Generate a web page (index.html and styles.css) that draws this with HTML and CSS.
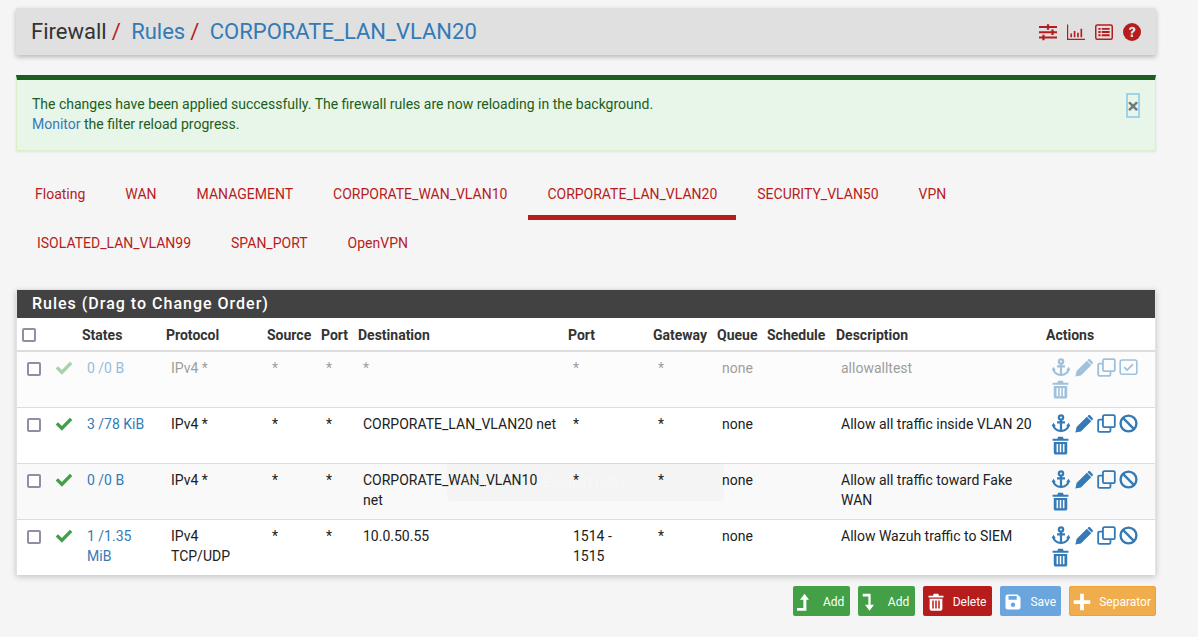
FILE: index.html
```html
<!DOCTYPE html>
<html lang="en">
<head>
<meta charset="utf-8">
<title>Firewall: Rules: CORPORATE_LAN_VLAN20</title>
<link rel="stylesheet" href="styles.css">
</head>
<body>
<svg class="sprite" aria-hidden="true">
  <defs>
    <symbol id="i-anchor" viewBox="0 0 24 24"><g fill="none" stroke="currentColor" stroke-width="2.8"><circle cx="12" cy="4.300" r="2.700"/><path d="M12 7v15M7 10.500h10"/><path d="M2.500 13.500c0 4.500 4.500 7.500 9.500 8 5-.5 9.500-3.500 9.500-8"/></g><path fill="currentColor" d="M0 15.500l2.500-4.500 3 4.500zM18.500 15.500l3-4.500 2.500 4.500z"/></symbol>
    <symbol id="i-pencil" viewBox="0 0 24 24"><path fill="currentColor" d="M.5 23.500l1.500-7L15 3.500l5.500 5.500-13 13zM16.500 2c.8-.8 2-.8 2.800 0l2.700 2.700c.8.800.8 2 0 2.800l-.8.800L15.700 2.800z"/></symbol>
    <symbol id="i-clone" viewBox="0 0 24 24"><g fill="none" stroke="currentColor" stroke-width="2.300"><rect x="7.500" y="1.500" width="15" height="15" rx="1.500"/><path d="M7.500 7h-4.500A1.500 1.500 0 0 0 1.500 8.500V21a1.500 1.500 0 0 0 1.500 1.500h12.500a1.500 1.500 0 0 0 1.500-1.500v-4.500"/></g></symbol>
    <symbol id="i-ban" viewBox="0 0 24 24"><g fill="none" stroke="currentColor" stroke-width="3"><circle cx="12" cy="12" r="10"/><path d="M5 5l14 14"/></g></symbol>
    <symbol id="i-check-sq" viewBox="0 0 24 24"><rect x="1.500" y="2.500" width="21" height="18" rx="2.500" fill="none" stroke="currentColor" stroke-width="2"/><path d="M6.500 11.500l3.700 3.700L17.500 8" fill="none" stroke="currentColor" stroke-width="2.300"/></symbol>
    <symbol id="i-trash" viewBox="0 0 24 24"><path fill="currentColor" fill-rule="evenodd" d="M8 3.500L9 1h6l1 2.500h6V6H2V3.500zM3.500 7.500h17V21a2.500 2.500 0 0 1-2.500 2.500H6A2.500 2.500 0 0 1 3.500 21zM7 10v10.500h2V10zM11 10v10.500h2V10zM15 10v10.500h2V10z"/></symbol>
    <symbol id="i-check" viewBox="0 0 24 24"><path fill="none" stroke="currentColor" stroke-width="4.600" d="M2.500 12.500l6.700 6.700L21.500 6.500"/></symbol>
    <symbol id="i-sliders" viewBox="0 0 24 24"><path fill="currentColor" d="M0 4h24v2.600H0zM0 11h24v2.600H0zM0 18h24v2.600H0zM10.500 1.500h3v7.500h-3zM16.500 8.500h3V16h-3zM4.500 15.500h3V23h-3z"/></symbol>
    <symbol id="i-chart" viewBox="0 0 24 24"><path fill="currentColor" d="M0 2h1.600v19H24v1.600H0zM4.500 14h2.200v5H4.500zM9 10.500h2.200V19H9zM13.500 13h2.200v6h-2.200zM18 7.500h2.200V19H18z"/></symbol>
    <symbol id="i-list" viewBox="0 0 24 24"><rect x="1" y="2.500" width="22" height="19" rx="2" fill="none" stroke="currentColor" stroke-width="2"/><path fill="currentColor" d="M4.500 6.500h3v2.400h-3zM9 6.500h10.500v2.400H9zM4.500 10.800h3v2.400h-3zM9 10.800h10.500v2.400H9zM4.500 15.100h3v2.400h-3zM9 15.100h10.500v2.400H9z"/></symbol>
    <symbol id="i-help" viewBox="0 0 24 24"><circle cx="12" cy="12" r="12" fill="currentColor"/><path d="M7.800 8.800c.4-2.700 2.200-3.800 4.500-3.800 2.500 0 4.300 1.500 4.300 3.500 0 3-3.300 3-3.300 5.500h-3c0-3.700 3.100-3.700 3.100-5.300 0-.7-.6-1.200-1.300-1.200-.8 0-1.300.5-1.500 1.700zM10.300 15.400h3v3.100h-3z" fill="#e0e0e0"/></symbol>
    <symbol id="i-up" viewBox="0 0 24 24"><path fill="currentColor" d="M10 1l6 8h-3.500v14.500H0V20h8.500V9H4z"/></symbol>
    <symbol id="i-down" viewBox="0 0 24 24"><path fill="currentColor" d="M1 1h10.500v14.500H16L10 23.500 4 15.500h4.500V4.500H1z"/></symbol>
    <symbol id="i-save" viewBox="0 0 24 24"><path fill="currentColor" fill-rule="evenodd" d="M2 5a3 3 0 0 1 3-3h13l4 4v13a3 3 0 0 1-3 3H5a3 3 0 0 1-3-3zM6 4v5h11V4zM12 12.500a3 3 0 1 0 0 6 3 3 0 0 0 0-6z"/></symbol>
    <symbol id="i-plus" viewBox="0 0 24 24"><path fill="currentColor" d="M9.500 1h5v8.500H23v5h-8.500V23h-5v-8.500H1v-5h8.500z"/></symbol>
  </defs>
</svg>

<main class="page">
  <header class="crumbs">
    <h1 class="crumbs-title">
      <span>Firewall</span><span class="sep">/</span>
      <a class="crumb-link" href="#">Rules</a><span class="sep">/</span>
      <a class="crumb-link" href="#">CORPORATE_LAN_VLAN20</a>
    </h1>
    <div class="crumbs-icons">
      <svg class="ci"><use href="#i-sliders"/></svg>
      <svg class="ci"><use href="#i-chart"/></svg>
      <svg class="ci"><use href="#i-list"/></svg>
      <svg class="ci"><use href="#i-help"/></svg>
    </div>
  </header>

  <section class="alert">
    <p>The changes have been applied successfully. The firewall rules are now reloading in the background.<br><a href="#">Monitor</a> the filter reload progress.</p>
    <button class="alert-close" type="button">×</button>
  </section>

  <nav>
    <ul class="tabs">
      <li><a href="#">Floating</a></li>
      <li><a href="#">WAN</a></li>
      <li><a href="#">MANAGEMENT</a></li>
      <li><a href="#">CORPORATE_WAN_VLAN10</a></li>
      <li class="active"><a href="#">CORPORATE_LAN_VLAN20</a></li>
      <li><a href="#">SECURITY_VLAN50</a></li>
      <li><a href="#">VPN</a></li>
      <li class="wrapped"><a href="#">ISOLATED_LAN_VLAN99</a></li>
      <li><a href="#">SPAN_PORT</a></li>
      <li><a href="#">OpenVPN</a></li>
    </ul>
  </nav>

  <section class="panel">
    <h2 class="panel-title">Rules (Drag to Change Order)</h2>
    <table class="rules">
      <colgroup>
        <col class="c-box"><col class="c-stat"><col class="c-states"><col class="c-proto"><col class="c-src"><col class="c-sport"><col class="c-dest"><col class="c-dport"><col class="c-gw"><col class="c-queue"><col class="c-sched"><col class="c-desc"><col class="c-act">
      </colgroup>
      <thead>
        <tr><th><span class="box"></span></th><th></th><th>States</th><th>Protocol</th><th>Source</th><th>Port</th><th>Destination</th><th>Port</th><th>Gateway</th><th>Queue</th><th>Schedule</th><th>Description</th><th>Actions</th></tr>
      </thead>
      <tbody>
        <tr class="disabled">
          <td><span class="box"></span></td>
          <td class="tick"><svg class="ok"><use href="#i-check"/></svg></td>
          <td><a href="#">0 /0 B</a></td><td>IPv4 *</td><td>*</td><td>*</td><td class="wide">*</td><td>*</td><td>*</td><td>none</td><td></td><td class="wide">allowalltest</td>
          <td class="acts"><svg class="a"><use href="#i-anchor"/></svg><svg class="a"><use href="#i-pencil"/></svg><svg class="a"><use href="#i-clone"/></svg><svg class="a"><use href="#i-check-sq"/></svg><svg class="a"><use href="#i-trash"/></svg></td>
        </tr>
        <tr>
          <td><span class="box"></span></td>
          <td class="tick"><svg class="ok"><use href="#i-check"/></svg></td>
          <td><a href="#">3 /78 KiB</a></td><td>IPv4 *</td><td>*</td><td>*</td><td class="wide">CORPORATE_LAN_VLAN20 net</td><td>*</td><td>*</td><td>none</td><td></td><td class="wide">Allow all traffic inside VLAN 20</td>
          <td class="acts"><svg class="a"><use href="#i-anchor"/></svg><svg class="a"><use href="#i-pencil"/></svg><svg class="a"><use href="#i-clone"/></svg><svg class="a"><use href="#i-ban"/></svg><svg class="a"><use href="#i-trash"/></svg></td>
        </tr>
        <tr class="alt">
          <td><span class="box"></span></td>
          <td class="tick"><svg class="ok"><use href="#i-check"/></svg></td>
          <td><a href="#">0 /0 B</a></td><td>IPv4 *</td><td>*</td><td>*</td><td class="wide">CORPORATE_WAN_VLAN10 net</td><td>*</td><td>*</td><td>none</td><td></td><td class="wide">Allow all traffic toward Fake WAN</td>
          <td class="acts"><svg class="a"><use href="#i-anchor"/></svg><svg class="a"><use href="#i-pencil"/></svg><svg class="a"><use href="#i-clone"/></svg><svg class="a"><use href="#i-ban"/></svg><svg class="a"><use href="#i-trash"/></svg></td>
        </tr>
        <tr>
          <td><span class="box"></span></td>
          <td class="tick"><svg class="ok"><use href="#i-check"/></svg></td>
          <td><a href="#">1 /1.35 MiB</a></td><td>IPv4 TCP/UDP</td><td>*</td><td>*</td><td class="wide">10.0.50.55</td><td>1514 - 1515</td><td>*</td><td>none</td><td></td><td class="wide">Allow Wazuh traffic to SIEM</td>
          <td class="acts"><svg class="a"><use href="#i-anchor"/></svg><svg class="a"><use href="#i-pencil"/></svg><svg class="a"><use href="#i-clone"/></svg><svg class="a"><use href="#i-ban"/></svg><svg class="a"><use href="#i-trash"/></svg></td>
        </tr>
      </tbody>
    </table>
  </section>

  <div class="buttons">
    <button class="btn green" type="button"><svg class="bi"><use href="#i-up"/></svg>Add</button>
    <button class="btn green" type="button"><svg class="bi"><use href="#i-down"/></svg>Add</button>
    <button class="btn red" type="button"><svg class="bi"><use href="#i-trash"/></svg>Delete</button>
    <button class="btn blue" type="button"><svg class="bi"><use href="#i-save"/></svg>Save</button>
    <button class="btn orange" type="button"><svg class="bi"><use href="#i-plus"/></svg>Separator</button>
  </div>
</main>

<div class="toast">
  <svg class="toast-icon" viewBox="0 0 26 20"><path fill="none" stroke="currentColor" d="M.5 6.500h25v13H.5zM4 10h18M4 13h18M8 16h10M14 6.500V1h5"/></svg>
  <span>English (US)</span>
</div>
</body>
</html>
```

FILE: styles.css
```css
* { box-sizing: border-box; }
html, body { height: 100%; }
body {
  margin: 0;
  background: #f5f5f5;
  font: 14px/20px Roboto, "Liberation Sans", sans-serif;
  color: #212121;
  overflow: hidden;
}
a { color: #337ab7; text-decoration: none; }
.sprite { width: 0; height: 0; position: absolute; }
.page { width: 1140px; margin-left: 16px; padding-top: 8px; }

.crumbs {
  height: 47px;
  background: #e0e0e0;
  box-shadow: 0 2px 5px rgba(0,0,0,.26);
  border-radius: 2px;
  display: flex;
  align-items: center;
  justify-content: space-between;
  padding: 0 15px;
}
.crumbs-title { margin: 0; font-size: 22px; font-weight: 400; line-height: 30px; color: #333; white-space: nowrap; }
.sep { color: #b71c1c; margin-left: 5px; }
.crumb-link { margin-left: 5px; }
.crumbs-icons { display: flex; gap: 10px; align-items: center; }
.ci { width: 18px; height: 18px; color: #b71c1c; }

.alert {
  margin-top: 20px;
  height: 76px;
  background: #e8f5e9;
  border: 1px solid #dcedc8;
  border-top: 5px solid #1b5e20;
  color: #1b5e20;
  padding: 14px 15px;
  display: flex;
  justify-content: space-between;
  box-shadow: 0 1px 2px rgba(0,0,0,.08);
}
.alert p { margin: 0; }
.alert-close {
  width: 14px;
  height: 25px;
  padding: 0;
  margin-top: -1px;
  background: transparent;
  border: 1px solid #9fd3ea;
  box-shadow: 0 0 0 1px #9fd3ea inset;
  color: #707a72;
  font: 700 21px/20px Roboto, sans-serif;
}

.tabs { list-style: none; margin: 20px 0 0; padding: 0; display: flex; flex-wrap: wrap; }
.tabs li { height: 49px; margin-right: 2px; border-bottom: 5px solid transparent; }
.tabs a { display: block; padding: 13px 19px 0; color: #b71c1c; }
.tabs .active { border-bottom-color: #b71c1c; }
.tabs .wrapped { margin-left: 2px; }

.panel {
  margin-top: 20px;
  background: #fff;
  border: 1px solid #e2e2e2;
  border-bottom: 0;
  box-shadow: 0 2px 6px rgba(0,0,0,.2);
}
.panel-title {
  margin: 0;
  height: 28px;
  background: #424242;
  color: #fff;
  font-size: 16px;
  font-weight: 500;
  line-height: 28px;
  letter-spacing: 1px;
  padding-left: 15px;
}
.rules { width: 100%; table-layout: fixed; border-collapse: collapse; }
.c-box { width: 30px; } .c-stat { width: 30px; } .c-states { width: 84px; } .c-proto { width: 101px; }
.c-src { width: 54px; } .c-sport { width: 37px; } .c-dest { width: 210px; } .c-dport { width: 85px; }
.c-gw { width: 64px; } .c-queue { width: 50px; } .c-sched { width: 69px; } .c-desc { width: 210px; } .c-act { width: 114px; }
.rules th {
  height: 33px;
  padding: 2px 0 0 5px;
  font-weight: 700;
  text-align: left;
  white-space: nowrap;
  border-bottom: 2px solid #ddd;
  color: #333;
  vertical-align: middle;
}
.rules th .box { margin-top: 0; }
.rules td {
  height: 56px;
  padding: 6px 10px 0 10px;
  vertical-align: top;
  border-top: 1px solid #ddd;
}
.rules td.wide { padding-right: 5px; }
.rules tbody tr:first-child td { border-top: 0; }
.rules .disabled td { background: #fcfcfc; color: #9e9e9e; }
.rules .disabled a { opacity: .5; }
.rules .disabled .ok, .rules .disabled .a { opacity: .45; }
.rules .alt td { background: #f9f9f9; }
.rules .tick { padding: 6px 0 0 8px; }
.box {
  display: block;
  width: 14px;
  height: 14px;
  border: 2px solid #8f8fa3;
  border-radius: 2px;
  background: #fff;
  margin-top: 4px;
}
.ok { width: 18px; height: 18px; color: #43a047; display: block; }
.rules .acts { padding: 6px 12px 0 10px; font-size: 0; line-height: 0; }
.a { width: 19px; height: 19px; color: #337ab7; margin: 0 3px 3px 0; display: inline-block; vertical-align: top; }
.a:first-child { width: 20px; margin-right: 4px; }

.buttons { display: flex; justify-content: flex-end; gap: 8px; margin-top: 11px; }
.btn {
  height: 30px;
  display: flex;
  align-items: center;
  padding: 1px 4px 0;
  border: 1px solid transparent;
  border-radius: 2px;
  color: #fff;
  font: 12px/16px Roboto, sans-serif;
}
.bi { width: 18px; height: 18px; margin: 0 8px 0 -1px; flex: none; }
.green { background: #43a047; padding-right: 4.5px; }
.red { background: #b71c1c; padding-right: 5px; }
.blue { background: #6aa5dd; }
.orange { background: #f0ad4e; border-color: #eea236; }

.toast {
  position: absolute;
  left: 447px;
  top: 463px;
  width: 277px;
  height: 38px;
  border-radius: 4px;
  background: rgba(0,0,0,.02);
  color: rgba(255,255,255,.3);
  font-size: 15px;
  line-height: 38px;
  padding-left: 96px;
  pointer-events: none;
}
.toast-icon { position: absolute; left: 12px; top: 9px; width: 26px; height: 20px; }
```
